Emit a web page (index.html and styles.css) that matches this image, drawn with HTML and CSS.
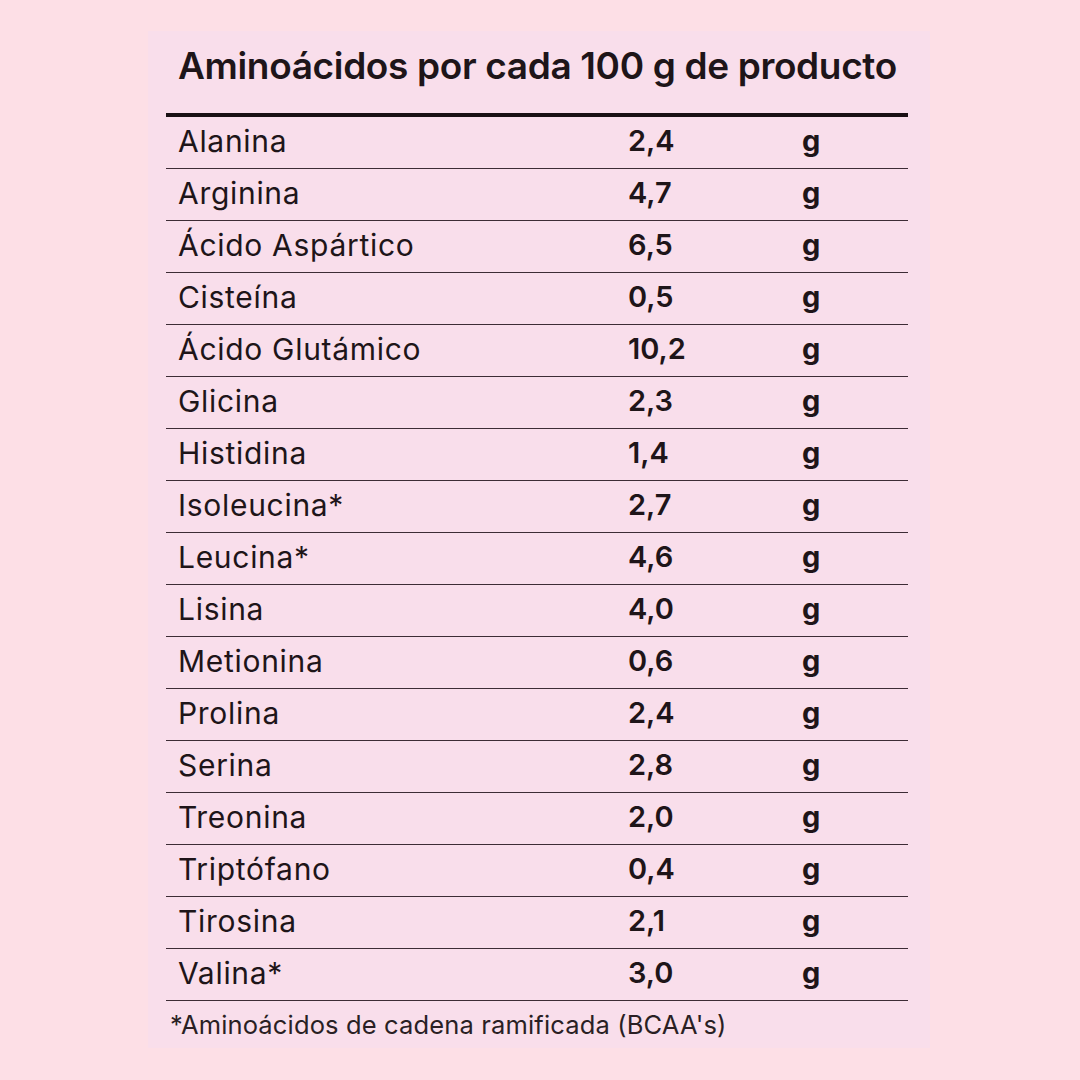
FILE: index.html
```html
<!DOCTYPE html>
<html lang="es">
<head>
<meta charset="utf-8">
<link rel="stylesheet" href="styles.css">
</head>
<body>
<div class="panel">
  <h1 class="title">Aminoácidos por cada 100 g de producto</h1>
  <div class="table">
    <div class="row"><span class="name">Alanina</span><span class="val">2,4</span><span class="unit">g</span></div>
    <div class="row"><span class="name">Arginina</span><span class="val">4,7</span><span class="unit">g</span></div>
    <div class="row"><span class="name">Ácido Aspártico</span><span class="val">6,5</span><span class="unit">g</span></div>
    <div class="row"><span class="name">Cisteína</span><span class="val">0,5</span><span class="unit">g</span></div>
    <div class="row"><span class="name">Ácido Glutámico</span><span class="val">10,2</span><span class="unit">g</span></div>
    <div class="row"><span class="name">Glicina</span><span class="val">2,3</span><span class="unit">g</span></div>
    <div class="row"><span class="name">Histidina</span><span class="val">1,4</span><span class="unit">g</span></div>
    <div class="row"><span class="name">Isoleucina*</span><span class="val">2,7</span><span class="unit">g</span></div>
    <div class="row"><span class="name">Leucina*</span><span class="val">4,6</span><span class="unit">g</span></div>
    <div class="row"><span class="name">Lisina</span><span class="val">4,0</span><span class="unit">g</span></div>
    <div class="row"><span class="name">Metionina</span><span class="val">0,6</span><span class="unit">g</span></div>
    <div class="row"><span class="name">Prolina</span><span class="val">2,4</span><span class="unit">g</span></div>
    <div class="row"><span class="name">Serina</span><span class="val">2,8</span><span class="unit">g</span></div>
    <div class="row"><span class="name">Treonina</span><span class="val">2,0</span><span class="unit">g</span></div>
    <div class="row"><span class="name">Triptófano</span><span class="val">0,4</span><span class="unit">g</span></div>
    <div class="row"><span class="name">Tirosina</span><span class="val">2,1</span><span class="unit">g</span></div>
    <div class="row"><span class="name">Valina*</span><span class="val">3,0</span><span class="unit">g</span></div>
  </div>
  <p class="note">*Aminoácidos de cadena ramificada (BCAA's)</p>
</div>
</body>
</html>
```
FILE: styles.css
```css
html, body {
  margin: 0;
  padding: 0;
  background: #fddfe6;
  width: 1080px;
  height: 1080px;
  font-family: "Inter", "Liberation Sans", sans-serif;
  color: #1e1519;
}
body {
  padding-top: 31px;
  box-sizing: border-box;
}
.panel {
  margin-left: 148px;
  width: 782px;
  height: 1017px;
  background: #f9deeb;
  box-sizing: border-box;
  padding: 0 22px 0 18px;
}
.title {
  margin: 0;
  padding: 12px 0 0 12px;
  height: 82px;
  box-sizing: border-box;
  font-size: 37px;
  font-weight: 600;
  letter-spacing: -0.35px;
  line-height: 46px;
  white-space: nowrap;
}
.table {
  border-top: 4px solid #1a1014;
}
.row {
  display: flex;
  align-items: center;
  height: 52px;
  box-sizing: border-box;
  border-bottom: 1.5px solid #3d2c35;
  padding-left: 12px;
  padding-bottom: 4px;
  font-size: 30px;
}
.name {
  width: 450px;
  font-weight: 400;
  letter-spacing: 0.7px;
}
.val {
  width: 174px;
  font-size: 29px;
  font-weight: 600;
}
.unit {
  font-size: 29px;
  font-weight: 700;
}
.note {
  margin: 8px 0 0 4px;
  font-size: 25.5px;
  letter-spacing: 0.15px;
  color: #2a1f24;
  white-space: nowrap;
}
```
